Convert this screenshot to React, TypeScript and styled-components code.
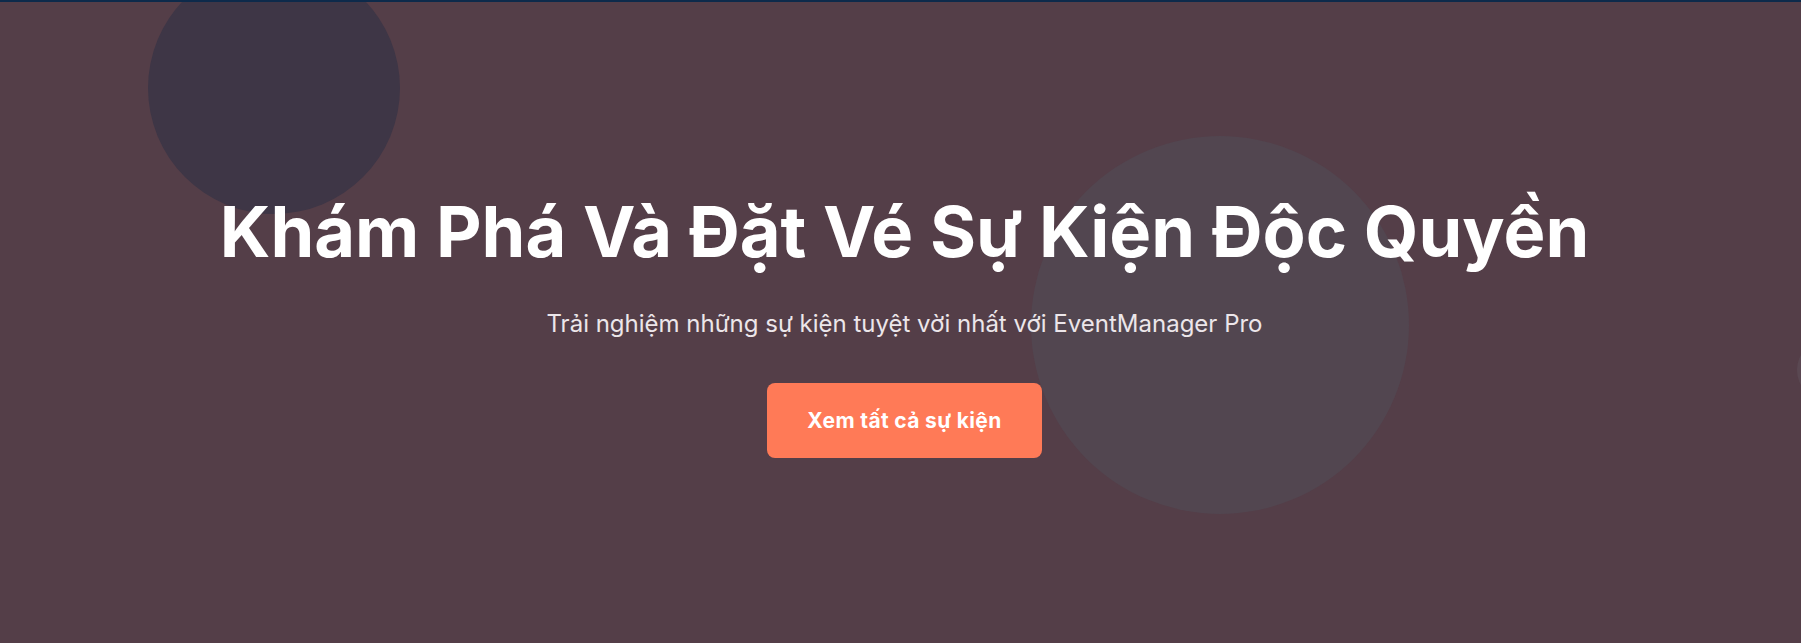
import React from "react";
import styled, { createGlobalStyle } from "styled-components";

const GlobalStyle = createGlobalStyle`
  * { box-sizing: border-box; }
  html, body { margin: 0; padding: 0; background: #543e48; }
  body { font-family: Inter, "Noto Sans", sans-serif; }
`;

const Hero = styled.section`
  position: relative;
  overflow: hidden;
  height: 643px;
  border-top: 2px solid #0d2a4b;
  background: #543e48;
  display: flex;
  flex-direction: column;
  align-items: center;
  padding: 188px 0 0 8px;
`;

const Bubble = styled.div<{ $size: number; $left: number; $top: number; $color: string }>`
  position: absolute;
  width: ${(p) => p.$size}px;
  height: ${(p) => p.$size}px;
  left: ${(p) => p.$left}px;
  top: ${(p) => p.$top}px;
  border-radius: 50%;
  background: ${(p) => p.$color};
  pointer-events: none;
`;

const Content = styled.div`
  position: relative;
  z-index: 1;
  display: flex;
  flex-direction: column;
  align-items: center;
  text-align: center;
`;

const Title = styled.h1`
  margin: 0;
  font-size: 70.4px;
  line-height: 1.2;
  font-weight: 700;
  color: #ffffff;
`;

const Subtitle = styled.p`
  margin: 32px 0 0;
  font-size: 24px;
  line-height: 36px;
  font-weight: 400;
  color: #ece6ea;
`;

const CtaButton = styled.button`
  margin-top: 41px;
  width: 275px;
  height: 75px;
  display: flex;
  align-items: center;
  justify-content: center;
  border: none;
  border-radius: 8px;
  background: #ff7a57;
  color: #ffffff;
  font-family: Inter, "Noto Sans", sans-serif;
  font-size: 21px;
  font-weight: 700;
  letter-spacing: 0.35px;
  cursor: pointer;
`;

export default function App() {
  return (
    <>
      <GlobalStyle />
      <Hero>
        <Bubble $size={252} $left={148} $top={-40} $color="#3e3646" />
        <Bubble $size={378} $left={1031} $top={134} $color="#524650" />
        <Bubble $size={60} $left={1797} $top={338} $color="#5a4852" />
        <Content>
          <Title>Khám Phá Và Đặt Vé Sự Kiện Độc Quyền</Title>
          <Subtitle>Trải nghiệm những sự kiện tuyệt vời nhất với EventManager Pro</Subtitle>
          <CtaButton>Xem tất cả sự kiện</CtaButton>
        </Content>
      </Hero>
    </>
  );
}
